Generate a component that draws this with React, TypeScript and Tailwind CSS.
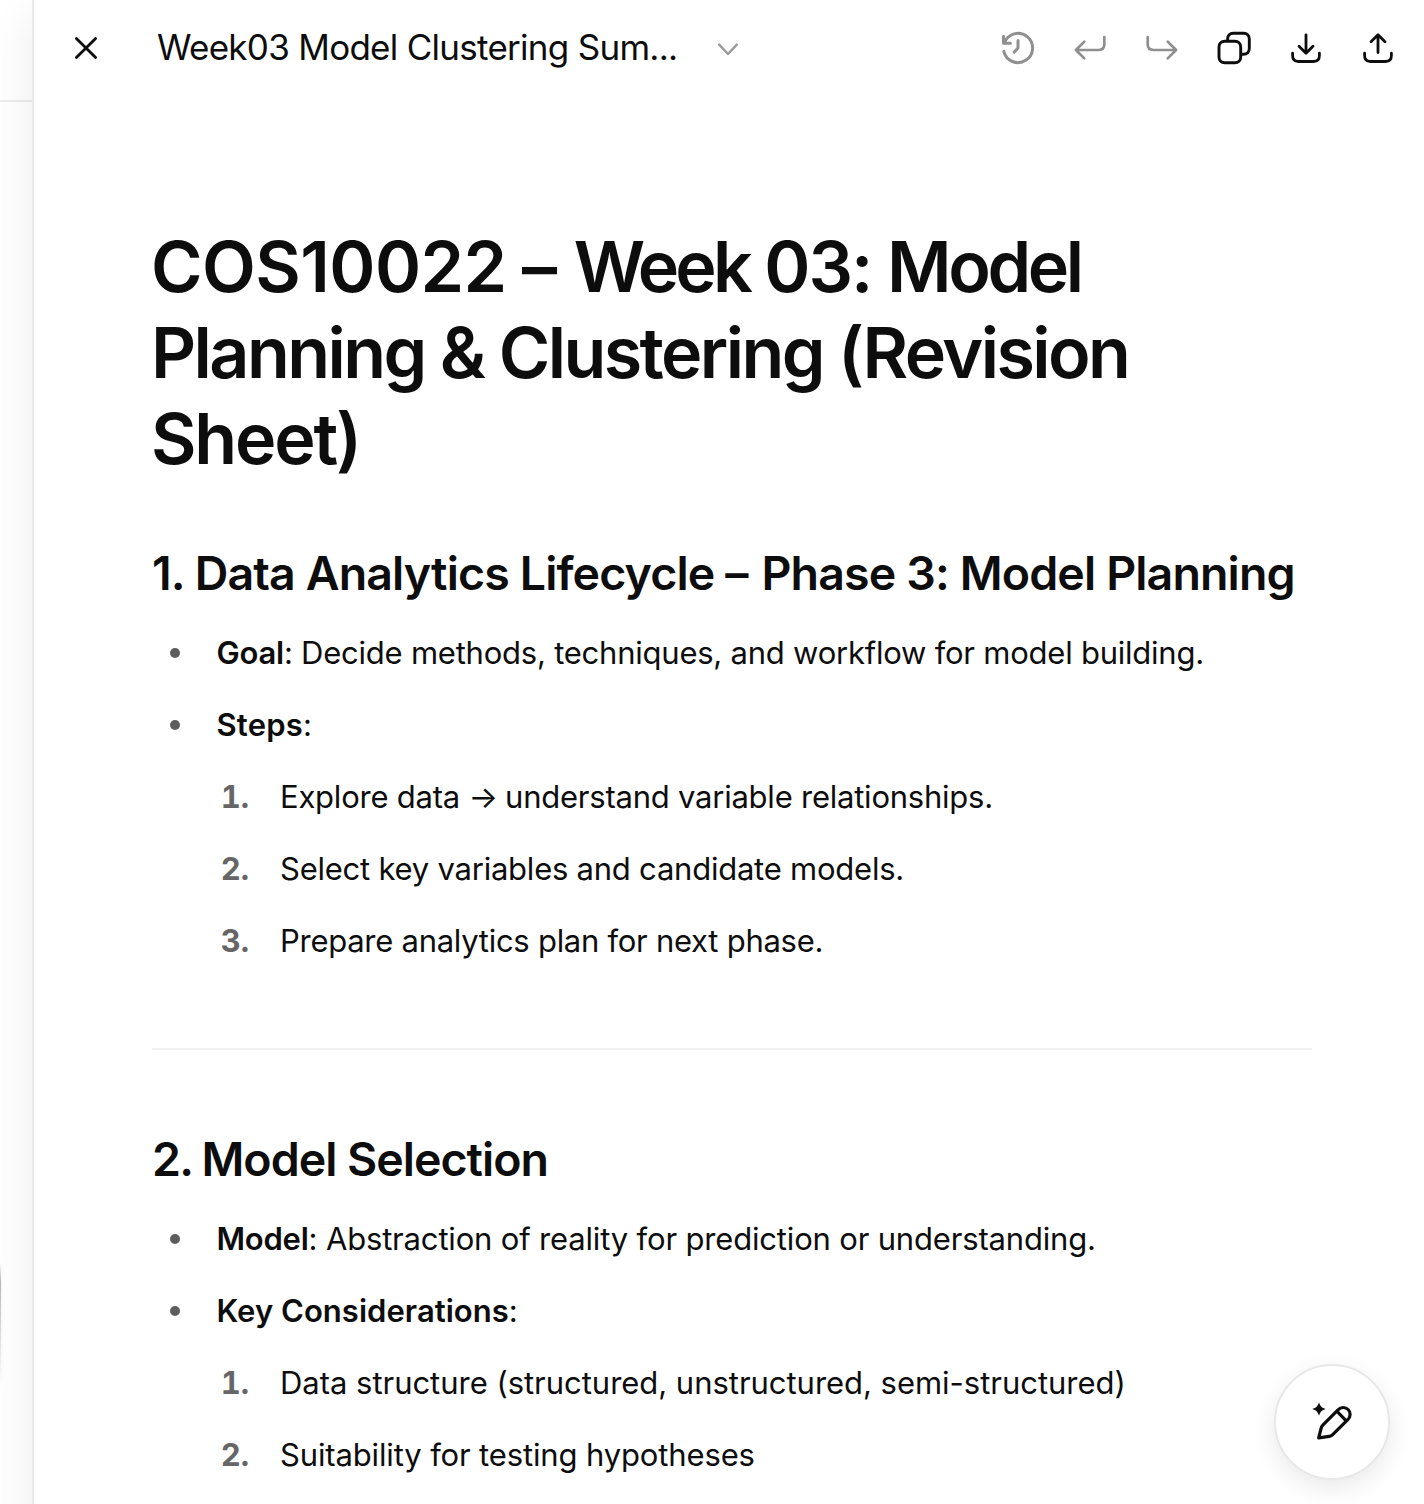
import React from "react";
import type { ReactNode } from "react";

function Icon({ d, w = 2.8, className = "" }: { d: string; w?: number; className?: string }) {
  return (
    <svg
      width="36"
      height="36"
      viewBox="0 0 36 36"
      fill="none"
      stroke="currentColor"
      strokeWidth={w}
      strokeLinecap="round"
      strokeLinejoin="round"
      className={`shrink-0 ${className}`}
    >
      <path d={d} />
    </svg>
  );
}

const TRAY = "M4.6 23.2V25.6C4.6 29.4 6.8 31.5 10.4 31.5H25.6C29.2 31.5 31.4 29.4 31.4 25.6V23.2";

const ICONS = {
  close: "M8.4 8.4L27.6 27.6M27.6 8.4L8.4 27.6",
  chevron: "M9.2 14.6L18 24L26.8 14.6",
  history: "M3.5 6.3V13.2H10.4M4.3 12.9A14.6 14.6 0 1 1 3.8 21.4M18 10.4V17.2C18 17.8 17.8 18.3 17.4 18.7L14.2 22.1",
  undo: "M12.3 11.6L3.9 20L12.3 28.4M4.2 20H26.6C30.2 20 32.3 18 32.3 14.6V7",
  redo: "M23.7 11.6L32.1 20L23.7 28.4M31.8 20H9.4C5.8 20 3.7 18 3.7 14.6V7",
  copy: "M8.8 11.3H18.9C22.3 11.3 24.7 13.5 24.7 17V27.2C24.7 30.5 22.3 32.7 18.9 32.7H8.8C5.3 32.7 3 30.5 3 27.2V17C3 13.5 5.3 11.3 8.8 11.3ZM11.6 11V9C11.6 5.5 13.9 3.3 17.2 3.3H27.6C31 3.3 33.3 5.5 33.3 9V18.6C33.3 22 31 24.3 27.6 24.3H25",
  download: `M18 4.8V22.6M11 16.2L18 23.2L25 16.2${TRAY}`,
  upload: `M18 22.6V4.8M11 11.8L18 4.8L25 11.8${TRAY}`,
};

function Header() {
  return (
    <header className="flex h-24 items-center pr-7 pl-[34px]">
      <Icon d={ICONS.close} />
      <h2 className="-mt-0.5 ml-[53px] text-[35px] leading-[48px] tracking-[-0.72px] whitespace-nowrap">
        Week03 Model Clustering Sum...
      </h2>
      <Icon d={ICONS.chevron} w={2.4} className="ml-[33px] text-[#9b9b9b]" />
      <div className="ml-auto flex items-center gap-9">
        <Icon d={ICONS.history} w={3} className="text-[#8f8f8f]" />
        <Icon d={ICONS.undo} w={2.7} className="text-[#8f8f8f]" />
        <Icon d={ICONS.redo} w={2.7} className="text-[#8f8f8f]" />
        <Icon d={ICONS.copy} w={2.9} />
        <Icon d={ICONS.download} />
        <Icon d={ICONS.upload} />
      </div>
    </header>
  );
}

function Bullet({ children }: { children: ReactNode }) {
  return (
    <li className="flex h-18 items-center whitespace-nowrap">
      <span className="ml-[18px] mr-[36.5px] size-2.5 rounded-full bg-[#5d5d5d]" />
      <p>{children}</p>
    </li>
  );
}

function Numbered({ n, children }: { n: number; children: ReactNode }) {
  return (
    <li className="flex h-18 items-center whitespace-nowrap">
      <span className="w-[97px] text-right font-bold tracking-[-0.1px] text-[#666666] tabular-nums">{n}.</span>
      <p className="ml-[31px]">{children}</p>
    </li>
  );
}

function Label({ children, className = "" }: { children: ReactNode; className?: string }) {
  return <strong className={`font-semibold ${className}`}>{children}</strong>;
}

function PenSparkle() {
  return (
    <svg width="48" height="48" viewBox="0 0 48 48" fill="none" stroke="currentColor" strokeLinejoin="round" strokeWidth="3.2">
      <path
        d="M11 4.2C12.2 8.2 13.8 9.8 17.8 11C13.8 12.2 12.2 13.8 11 17.8C9.8 13.8 8.2 12.2 4.2 11C8.2 9.8 9.8 8.2 11 4.2Z"
        fill="currentColor"
        stroke="none"
      />
      <path d="M10.7 39.9L12.9 31C13.3 29.3 13.8 28.2 14.8 27.2L30 11.9C33 8.8 37.4 8.7 40.1 11.5C42.9 14.3 42.8 18.6 39.8 21.6L24.4 36.9C23.5 37.8 22.5 38.2 21.2 38.4L10.7 39.9Z" />
      <path d="M28.8 13.2L38 22.6" />
    </svg>
  );
}

export default function App() {
  return (
    <div className="relative flex h-[1504px] w-[1424px] overflow-hidden bg-white font-['Inter',sans-serif] text-[#0d0d0d]">
      <aside className="flex w-8 shrink-0 flex-col">
        <div className="h-[102px] shrink-0 border-b-2 border-[#ececec]" />
        <div className="mt-[1162px] h-[120px] w-px bg-linear-to-b from-transparent via-[#b8b8b8] via-15% to-transparent shadow-[0_0_3px_rgba(0,0,0,0.1)]" />
      </aside>

      <main className="h-[1640px] grow border-l-2 border-[#ebebeb] bg-white shadow-[0_16px_44px_rgba(0,0,0,0.08)]">
        <Header />
        <article className="mt-32 ml-[118px] w-[1160px] text-[31px] leading-[72px] tracking-[-0.23px]">
          <h1 className="-ml-px text-[70px] leading-[86px] font-semibold whitespace-nowrap">
            <span className="block tracking-[-2.3px]">
              <span className="tracking-[-0.55px]">COS10022</span> <span className="tracking-[-0.5px]">– </span>
              <span className="tracking-[-3.8px]">Week</span> <span className="tracking-[-1.98px]">03: </span>
              <span className="tracking-[-3.4px]">Model</span>
            </span>
            <span className="block tracking-[-2.57px]">Planning &amp; Clustering (Revision</span>
            <span className="block tracking-[-2.18px]">Sheet)</span>
          </h1>

          <h2 className="mt-[59px] text-[46.5px] leading-16 font-semibold tracking-[-0.86px] whitespace-nowrap">
            1. Data Analytics Lifecycle <span className="tracking-[0.6px]">– </span>Phase 3: Model Planning
          </h2>
          <ul className="mt-3">
            <Bullet>
              <Label>Goal</Label>: Decide methods, techniques, and workflow for model building.
            </Bullet>
            <Bullet>
              <Label className="tracking-[0.2px]">Steps</Label>:
            </Bullet>
          </ul>
          <ol>
            <Numbered n={1}>
              Explore data <span className="tracking-[-1.4px]">→</span> understand variable relationships.
            </Numbered>
            <Numbered n={2}>Select key variables and candidate models.</Numbered>
            <Numbered n={3}>
              <span className="tracking-[-0.27px]">Prepare analytics plan for next phase.</span>
            </Numbered>
          </ol>

          <hr className="mt-[71px] border-t-2 border-[#f1f1f1]" />

          <h2 className="mt-[77px] text-[46.5px] leading-16 font-semibold tracking-[-1px] whitespace-nowrap">
            <span className="tracking-[-1.7px]">2. </span>Model Selection
          </h2>
          <ul className="mt-3">
            <Bullet>
              <Label>Model</Label>
              <span className="tracking-[-0.17px]">: Abstraction of reality for prediction or understanding.</span>
            </Bullet>
            <Bullet>
              <Label className="tracking-[0.04px]">Key Considerations</Label>:
            </Bullet>
          </ul>
          <ol>
            <Numbered n={1}>
              <span className="tracking-[-0.03px]">Data structure (structured, unstructured, semi-structured)</span>
            </Numbered>
            <Numbered n={2}>
              <span className="tracking-[-0.14px]">Suitability for testing hypotheses</span>
            </Numbered>
          </ol>
        </article>
      </main>

      <button className="absolute top-[1364px] left-[1274px] flex size-[116px] items-center justify-center rounded-full border-2 border-[#e8e8e8] bg-white shadow-[0_8px_24px_rgba(0,0,0,0.09)]">
        <PenSparkle />
      </button>
    </div>
  );
}
